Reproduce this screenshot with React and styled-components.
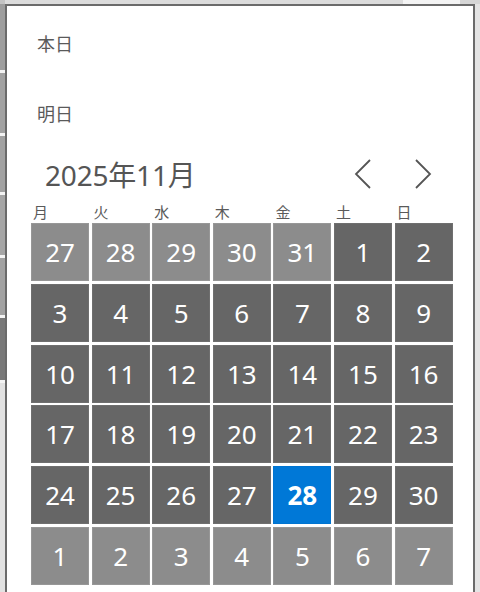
import React from "react";
import styled, { createGlobalStyle } from "styled-components";

const GlobalStyle = createGlobalStyle`
  html, body {
    margin: 0;
    padding: 0;
    background: #ffffff;
    overflow: hidden;
  }
  body {
    font-family: "Noto Sans", "Noto Sans CJK JP", sans-serif;
  }
`;

const Page = styled.div`
  width: 480px;
  height: 592px;
  display: flex;
  flex-direction: column;
  overflow: hidden;
  background: #f0f0f0;
`;

const TopStrip = styled.div`
  height: 4px;
  display: flex;
  flex-shrink: 0;
`;

const TopPiece = styled.div`
  width: ${(p) => p.$w}px;
  flex: ${(p) => (p.$w ? "none" : 1)};
  background: ${(p) => p.$c};
`;

const Body = styled.div`
  flex: 1;
  display: flex;
  min-height: 0;
`;

const SideStrip = styled.div`
  width: 5px;
  display: flex;
  flex-direction: column;
  flex-shrink: 0;
  gap: 3px;
  background: #f4f4f4;
`;

const SidePiece = styled.div`
  height: ${(p) => p.$h}px;
  flex: ${(p) => (p.$h ? "none" : 1)};
  background: ${(p) => p.$c};
`;

const Popup = styled.div`
  width: 470px;
  height: 620px;
  flex-shrink: 0;
  background: #ffffff;
  border: 2px solid #6b6b6b;
  border-bottom: none;
  box-sizing: border-box;
  padding-top: 2px;
  display: flex;
  flex-direction: column;
`;

const QuickItem = styled.div`
  height: 70px;
  display: flex;
  align-items: center;
  padding-left: 30px;
  font-family: "Noto Sans CJK JP", sans-serif;
  font-size: 18px;
  color: #5a5a5a;
`;

const Header = styled.div`
  height: 52px;
  display: flex;
  align-items: center;
  padding-left: 38px;
`;

const MonthTitle = styled.div`
  flex: 1;
  font-family: "Noto Sans", "Noto Sans CJK JP", sans-serif;
  font-size: 28px;
  color: #555555;
  letter-spacing: -0.2px;
`;

const NavButton = styled.button`
  width: 22px;
  height: 32px;
  padding: 0;
  margin-right: ${(p) => p.$mr}px;
  border: none;
  background: transparent;
  display: flex;
  align-items: center;
  justify-content: center;
`;

const WeekRow = styled.div`
  height: 23px;
  display: grid;
  grid-template-columns: repeat(7, 58px);
  column-gap: 2.6px;
  padding-left: 24px;
  align-items: center;
`;

const WeekLabel = styled.div`
  padding-left: 2px;
  font-family: "Noto Sans CJK JP", sans-serif;
  font-size: 15px;
  color: #5a5a5a;
`;

const Grid = styled.div`
  display: grid;
  grid-template-columns: repeat(7, 58px);
  grid-auto-rows: 58px;
  column-gap: 2.6px;
  row-gap: 2.8px;
  padding-left: 24px;
`;

const Cell = styled.div`
  display: flex;
  align-items: center;
  justify-content: center;
  background: ${(p) =>
    p.$selected ? "#0078d7" : p.$outside ? "#8c8c8c" : "#666666"};
  box-shadow: inset 0 0 0 1px
    ${(p) => (p.$selected ? "#0074d0" : p.$outside ? "#979797" : "#6f6f6f")};
  color: #ffffff;
  font-family: "Noto Sans", sans-serif;
  font-size: 26px;
  font-weight: ${(p) => (p.$selected ? 700 : 400)};
`;

const Chevron = ({ dir }) => (
  <svg width="18" height="30" viewBox="0 0 18 30">
    <polyline
      points={dir === "left" ? "16,1 2,15 16,29" : "2,1 16,15 2,29"}
      fill="none"
      stroke="#555555"
      strokeWidth="1.8"
    />
  </svg>
);

const weekdays = ["月", "火", "水", "木", "金", "土", "日"];

const buildDays = () => {
  const days = [];
  [27, 28, 29, 30, 31].forEach((d) => days.push({ d, outside: true }));
  for (let d = 1; d <= 30; d++) days.push({ d, selected: d === 28 });
  for (let d = 1; d <= 7; d++) days.push({ d, outside: true });
  return days;
};

export default function App() {
  const days = buildDays();
  return (
    <>
      <GlobalStyle />
      <Page>
        <TopStrip>
          <TopPiece $w={5} $c="#c4c4c4" />
          <TopPiece $c="#dcdcdc" />
          <TopPiece $w={57} $c="#f4f4f4" />
          <TopPiece $w={20} $c="#d6d6d6" />
        </TopStrip>
        <Body>
          <SideStrip>
            <SidePiece $h={66} $c="#9e9e9e" />
            <SidePiece $h={60} $c="#a2a2a2" />
            <SidePiece $h={56} $c="#a2a2a2" />
            <SidePiece $h={60} $c="#a6a6a6" />
            <SidePiece $h={57} $c="#a2a2a2" />
            <SidePiece $h={62} $c="#787878" />
            <SidePiece $c="#e2e2e2" />
          </SideStrip>
          <Popup>
            <QuickItem>本日</QuickItem>
            <QuickItem>明日</QuickItem>
            <Header>
              <MonthTitle>2025年11月</MonthTitle>
              <NavButton $mr={38}>
                <Chevron dir="left" />
              </NavButton>
              <NavButton $mr={39}>
                <Chevron dir="right" />
              </NavButton>
            </Header>
            <WeekRow>
              {weekdays.map((w) => (
                <WeekLabel key={w}>{w}</WeekLabel>
              ))}
            </WeekRow>
            <Grid>
              {days.map((day, i) => (
                <Cell key={i} $outside={day.outside} $selected={day.selected}>
                  {day.d}
                </Cell>
              ))}
            </Grid>
          </Popup>
          <SidePiece $c="#e4e4e4" />
        </Body>
      </Page>
    </>
  );
}
